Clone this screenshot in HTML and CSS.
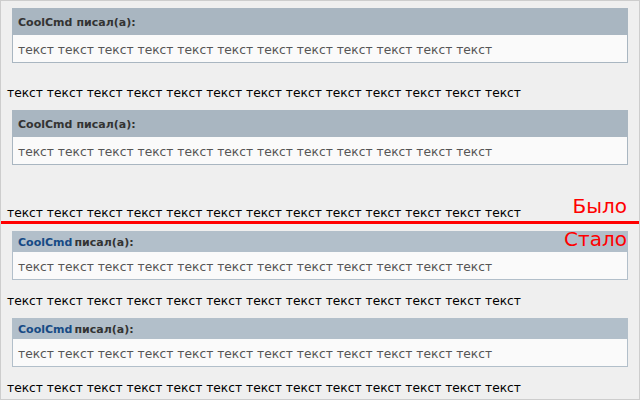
FILE: index.html
```html
<!DOCTYPE html>
<html lang="ru">
<head>
<meta charset="utf-8">
<title>Цитаты</title>
<link rel="stylesheet" href="styles.css">
</head>
<body>
<div class="page">
  <section class="part old">
    <div class="quote">
      <div class="qh"><b class="author">CoolCmd</b> писал(а):</div>
      <div class="qb">текст текст текст текст текст текст текст текст текст текст текст текст</div>
    </div>
    <p class="plain">текст текст текст текст текст текст текст текст текст текст текст текст текст</p>
    <div class="quote">
      <div class="qh"><b class="author">CoolCmd</b> писал(а):</div>
      <div class="qb">текст текст текст текст текст текст текст текст текст текст текст текст</div>
    </div>
    <p class="plain last">текст текст текст текст текст текст текст текст текст текст текст текст текст</p>
  </section>
  <div class="divider">
    <span class="label was">Было</span>
    <span class="label now">Стало</span>
  </div>
  <section class="part new">
    <div class="quote">
      <div class="qh"><b class="author">CoolCmd</b> писал(а):</div>
      <div class="qb">текст текст текст текст текст текст текст текст текст текст текст текст</div>
    </div>
    <p class="plain">текст текст текст текст текст текст текст текст текст текст текст текст текст</p>
    <div class="quote">
      <div class="qh"><b class="author">CoolCmd</b> писал(а):</div>
      <div class="qb">текст текст текст текст текст текст текст текст текст текст текст текст</div>
    </div>
    <p class="plain end">текст текст текст текст текст текст текст текст текст текст текст текст текст</p>
  </section>
</div>
</body>
</html>
```
FILE: styles.css
```css
html, body {
  margin: 0;
  padding: 0;
}
body {
  width: 640px;
  height: 400px;
  overflow: hidden;
  background: #efefef;
}
.page {
  box-sizing: border-box;
  width: 640px;
  height: 400px;
  border: 1px solid #cdcdcd;
  background: #efefef;
  position: relative;
  overflow: hidden;
  font-family: "DejaVu Sans", Verdana, sans-serif;
}
.part {
  display: flex;
  flex-direction: column;
}
.old {
  padding-top: 7px;
}
.quote {
  margin: 0 11px;
  border: 1px solid #a9b6c1;
  background: #fafafa;
}
.qh {
  height: 26px;
  display: flex;
  align-items: center;
  padding-left: 5px;
  background: #a9b6c1;
  color: #333;
  font-size: 11px;
  font-weight: bold;
}
.qh .author {
  margin-right: 4px;
}
.qb {
  box-sizing: border-box;
  height: 27px;
  display: flex;
  align-items: center;
  padding: 2px 0 0 5px;
  color: #555;
  font-size: 12.25px;
}
.plain {
  box-sizing: border-box;
  margin: 0;
  height: 47px;
  padding: 22px 0 0 6px;
  line-height: 16px;
  color: #000;
  font-size: 12.25px;
  white-space: nowrap;
}
.old .plain.last {
  height: 56px;
  padding-top: 40px;
}
.divider {
  position: relative;
  height: 3px;
  background: #ff0000;
}
.label {
  position: absolute;
  right: 12px;
  color: #ff0000;
  font-size: 20px;
  line-height: 24px;
}
.label.was {
  bottom: 6px;
}
.label.now {
  top: 6px;
  z-index: 1;
}
.new {
  padding-top: 7px;
}
.new .quote {
  border-color: #b2bfca;
}
.new .qh {
  height: 20px;
  background: #b2bfca;
}
.new .qh .author {
  color: #164a85;
  margin-right: 2px;
}
.new .plain {
  height: 38px;
  padding-top: 13px;
}
.new .plain.end {
  height: 30px;
  padding-top: 13px;
}
```
